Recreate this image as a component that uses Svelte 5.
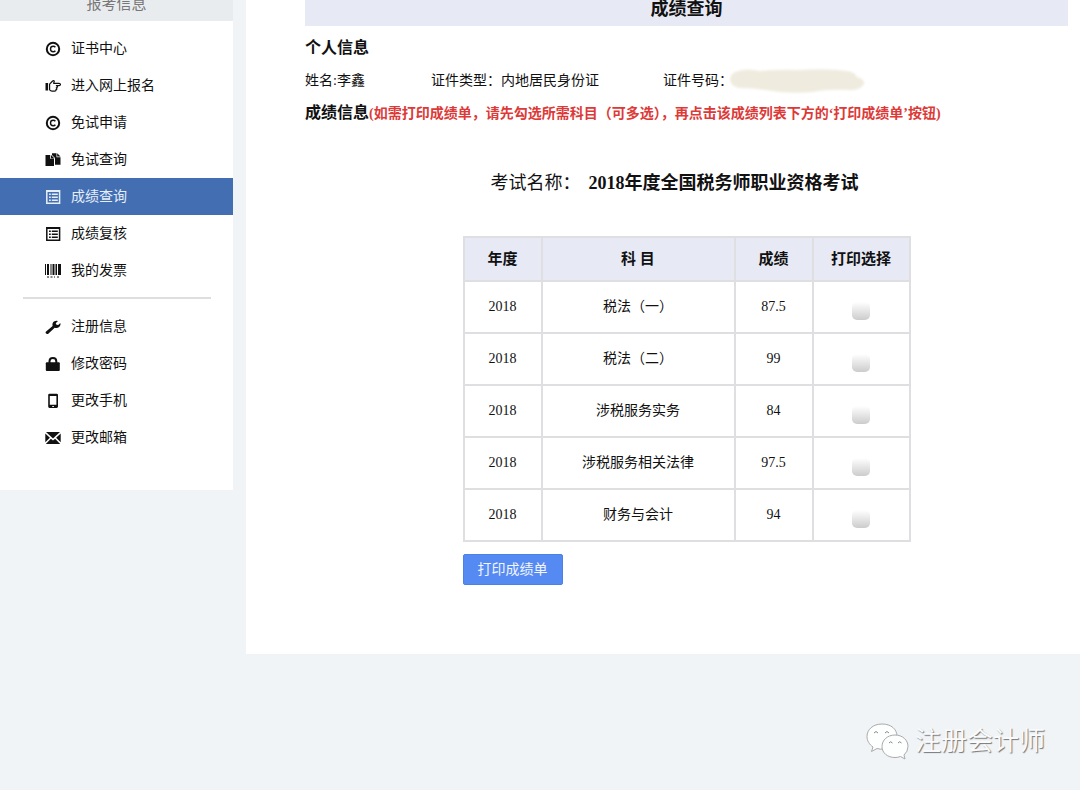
<script>
  const examMenu = [
    { label: '证书中心', icon: 'copyright' },
    { label: '进入网上报名', icon: 'hand' },
    { label: '免试申请', icon: 'copyright' },
    { label: '免试查询', icon: 'copy' },
    { label: '成绩查询', icon: 'list', active: true },
    { label: '成绩复核', icon: 'list' },
    { label: '我的发票', icon: 'barcode' }
  ];
  const accountMenu = [
    { label: '注册信息', icon: 'wrench' },
    { label: '修改密码', icon: 'lock' },
    { label: '更改手机', icon: 'phone' },
    { label: '更改邮箱', icon: 'mail' }
  ];
  let rows = $state([
    { year: 2018, subject: '税法（一）', score: '87.5', checked: false },
    { year: 2018, subject: '税法（二）', score: '99', checked: false },
    { year: 2018, subject: '涉税服务实务', score: '84', checked: false },
    { year: 2018, subject: '涉税服务相关法律', score: '97.5', checked: false },
    { year: 2018, subject: '财务与会计', score: '94', checked: false }
  ]);
</script>

{#snippet glyph(name)}
  <svg class="icon" viewBox="0 0 16 16" aria-hidden="true">
    {#if name === 'copyright'}
      <circle cx="8" cy="8" r="6.2" fill="none" stroke="currentColor" stroke-width="2" />
      <path d="M10.4 6.3Q9.6 5.3 8.2 5.3A2.7 2.7 0 0 0 8.2 10.7Q9.6 10.7 10.4 9.7" fill="none" stroke="currentColor" stroke-width="1.4" />
    {:else if name === 'hand'}
      <path d="M.5 5h2.600v7.500H.5z" fill="currentColor" />
      <path d="M4.600 11.800V6.200L7.600 3q1.500-1 1.700.4L8.600 5.300H14q1.500.2 1.500 1.200T14 7.700h-2.600q1.100.3 1 1.200t-1.100 1q.7.3.5 1.100t-1 .9q.2 1.200-1.100 1.200H7q-1.300-.2-2.400-1.300z" fill="none" stroke="currentColor" stroke-width="1.2" stroke-linejoin="round" />
    {:else if name === 'copy'}
      <path d="M.5 3h4.700v3.800H9V14H.5z" fill="currentColor" />
      <path d="M6 3l3.500 3.500H6z" fill="currentColor" />
      <path d="M7 1.200h4.500v4h4v7.600H10V6L7 3z" fill="currentColor" />
      <path d="M12.200 1.200l3.300 3.300h-3.300z" fill="currentColor" />
    {:else if name === 'list'}
      <path d="M1.800 1.700h12.800v12.600H1.800z" fill="none" stroke="currentColor" stroke-width="1.500" />
      <path d="M1.500 2h13.500" stroke="currentColor" stroke-width="2" />
      <path d="M4 5.300h1.800M4 8.300h1.800M4 11.300h1.800M6.800 5.300h6M6.800 8.300h6M6.800 11.300h6" stroke="currentColor" stroke-width="1.400" />
    {:else if name === 'barcode'}
      <path d="M0 1h1v11H0zM2 1h2v11H2zM5.500 1h1v11h-1zM7.500 1h2v11h-2zM10.500 1H12v11h-1.500zM13 1h3v11h-3z" fill="currentColor" />
      <path d="M2 14h2M5.500 14h2M9 14h1M12 14h2" stroke="currentColor" />
    {:else if name === 'wrench'}
      <path d="M.8 12.700L7.600 7Q6.800 3.700 9.400 2.200q1.800-.9 3.600-.2L10.700 4.200l.8 1.500 1.700.2L15.400 4q.6 2.200-1 3.800-1.900 1.700-4.700 1L3 14.900q-1.200.5-2-.3t-.2-1.900z" fill="currentColor" />
    {:else if name === 'lock'}
      <path d="M4.500 8V5.300q0-3.400 3.400-3.400t3.400 3.400V8" fill="none" stroke="currentColor" stroke-width="2" />
      <rect x=".8" y="6.200" width="14" height="8.800" rx="1" fill="currentColor" />
    {:else if name === 'phone'}
      <path fill-rule="evenodd" d="M4.500.8h7.200q1.300 0 1.300 1.300v11.500q0 1.400-1.300 1.400H4.500q-1.300 0-1.300-1.400V2.100q0-1.300 1.300-1.300zM4.800 3v8.800h6.600V3zM7.300 12.900v1.100h1.600v-1.100z" fill="currentColor" />
    {:else if name === 'mail'}
      <path d="M1 2h14L8 8.400zM.3 3.600l4.600 4.100L.3 12.300zM15.700 3.600l-4.600 4.100 4.600 4.600zM5.900 8.700L8 10.500l2.100-1.800 5.100 5.200H.8z" fill="currentColor" />
    {/if}
  </svg>
{/snippet}

{#snippet menu(items)}
  <ul class="menu">
    {#each items as item}
      <li>
        <a href="#menu" class:active={item.active} aria-current={item.active ? 'page' : undefined}>
          {@render glyph(item.icon)}<span>{item.label}</span>
        </a>
      </li>
    {/each}
  </ul>
{/snippet}

<div class="layout">
  <nav class="sidebar">
    <div class="group-title">报考信息</div>
    {@render menu(examMenu)}
    <hr />
    {@render menu(accountMenu)}
  </nav>

  <main>
    <h1>成绩查询</h1>
    <h2>个人信息</h2>
    <div class="person">
      <span>姓名:李鑫</span>
      <span>证件类型：内地居民身份证</span>
      <span class="number">证件号码：<svg class="mask" viewBox="0 0 136 26" aria-hidden="true">
          <path d="M9 3Q18 0 31 3Q50 1 70 2Q98 0 119 3Q127 5 128 9Q136 11 135 16Q131 23 119 22Q98 21 84 24Q60 26 43 23Q25 20 10 20Q1 18 1 11Q2 4 9 3z" />
        </svg></span>
    </div>
    <h2>成绩信息<span class="hint">(如需打印成绩单，请先勾选所需科目（可多选），再点击该成绩列表下方的‘打印成绩单’按钮)</span></h2>

    <section class="result">
      <p class="exam">考试名称：<strong>2018年度全国税务师职业资格考试</strong></p>
      <table>
        <thead>
          <tr><th class="narrow">年度</th><th>科 目</th><th class="narrow">成绩</th><th class="pick">打印选择</th></tr>
        </thead>
        <tbody>
          {#each rows as row}
            <tr>
              <td>{row.year}</td>
              <td>{row.subject}</td>
              <td>{row.score}</td>
              <td><input type="checkbox" aria-label={row.subject} bind:checked={row.checked} /></td>
            </tr>
          {/each}
        </tbody>
      </table>
      <button type="button">打印成绩单</button>
    </section>
  </main>
</div>

<footer>
  <svg class="chat" viewBox="0 0 44 38" aria-hidden="true">
    <path d="M16 1C7 1 1 6.500 1 13.500C1 18 3.500 21.500 7 24L5.500 28.500L11 25.500Q14 26.500 18 26Q30 25 31 13.500C31 6 25 1 16 1z" />
    <path d="M29 12C21.500 12 16 17 16 23.500S21.500 34.500 29 34.500Q32 34.500 34.500 33.500L39 36L38 32Q42 28.500 42 23.500C42 17 36.500 12 29 12z" />
    <path class="eyes" d="M8 10q2-3 4 0M19 10q2-3 4 0M23 20q1.500-2.500 3.500 0M32 20q1.500-2.500 3.500 0" />
  </svg>
  <span>注册会计师</span>
</footer>

<style>
  :global(body) {
    margin: 0;
    background: #f0f4f7;
    color: #111;
    font-family: "Liberation Serif", "Noto Sans CJK SC", serif;
    font-size: 14px;
    line-height: 20px;
  }
  .layout {
    display: flex;
    align-items: flex-start;
    gap: 13px;
  }
  .sidebar {
    flex: none;
    width: 233px;
    box-sizing: border-box;
    padding-bottom: 34px;
    background: #fff;
  }
  .group-title {
    padding-bottom: 13px;
    margin-bottom: 9px;
    background: #e9ecef;
    color: #777;
    font-size: 15px;
    line-height: 8px;
    text-align: center;
  }
  .menu {
    margin: 0;
    padding: 0;
    list-style: none;
  }
  .menu a {
    display: flex;
    align-items: center;
    gap: 10px;
    height: 37px;
    padding-left: 45px;
    color: #111;
    text-decoration: none;
  }
  .menu a.active {
    background: #436fb2;
    color: #e6eefa;
  }
  .icon {
    width: 16px;
    height: 16px;
  }
  hr {
    margin: 8px 22px 9px 23px;
    border: 0;
    border-top: 2px solid #dedede;
  }
  main {
    flex: 1;
    min-width: 0;
    padding: 0 12px 69px 59px;
    background: #fff;
  }
  h1 {
    margin: 0 0 10px;
    padding-bottom: 8px;
    background: #e7eaf5;
    font-size: 18px;
    line-height: 18px;
    text-align: center;
  }
  h2 {
    margin: 0;
    font-size: 16px;
    line-height: 24px;
    white-space: nowrap;
  }
  .person {
    display: grid;
    grid-template-columns: 126px 232px 1fr;
    align-items: center;
    height: 41px;
  }
  .number {
    display: flex;
    align-items: center;
  }
  .mask {
    width: 136px;
    height: 26px;
    margin-left: -4px;
    fill: #efecdf;
    filter: blur(1px);
  }
  .hint {
    color: #dc3a38;
    font-size: 14px;
  }
  .result {
    width: 448px;
    max-width: 100%;
    margin: 0 auto;
  }
  .exam {
    margin: 44px 0 40px;
    padding-left: 28px;
    font-size: 18px;
    line-height: 26px;
    white-space: nowrap;
  }
  .exam strong {
    margin-left: 8px;
  }
  table {
    width: 100%;
    table-layout: fixed;
    border-collapse: collapse;
    text-align: center;
  }
  th,
  td {
    padding: 0;
    border: 2px solid #dfdfe1;
  }
  th {
    height: 42px;
    background: #e7eaf5;
    font-size: 15px;
  }
  td {
    height: 50px;
  }
  .narrow {
    width: 76px;
  }
  .pick {
    width: 95px;
  }
  input {
    appearance: none;
    width: 18px;
    height: 18px;
    margin: 8px 0 0;
    border-radius: 5px;
    background: linear-gradient(#fff, #ccc);
    vertical-align: middle;
  }
  input:checked {
    background: #5186f0;
  }
  button {
    margin-top: 12px;
    padding: 0 14px;
    height: 31px;
    border: 1px solid #4b80e6;
    border-radius: 2px;
    background: #568af3;
    color: #f2f6ff;
    font: inherit;
  }
  footer {
    display: flex;
    justify-content: flex-end;
    align-items: center;
    gap: 5px;
    padding: 68px 35px 26px 0;
    color: #f8fafb;
    font-size: 26px;
    line-height: 40px;
    text-shadow: 1px 1px 1px #777;
  }
  .chat {
    width: 44px;
    height: 38px;
    fill: #fdfefe;
    stroke: #aaa;
    stroke-width: 1;
  }
  .eyes {
    fill: none;
    stroke: #888;
  }
</style>
